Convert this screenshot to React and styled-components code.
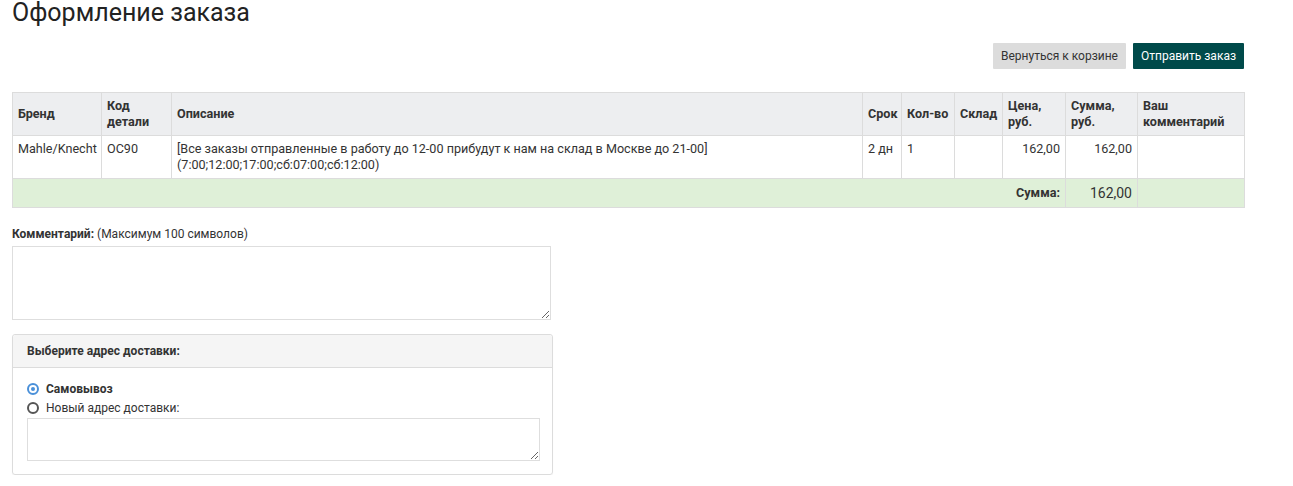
import React from 'react'
import styled, { createGlobalStyle } from 'styled-components'

const GlobalStyle = createGlobalStyle`
  body {
    margin: 0;
    background: #fff;
    font-family: Roboto, "Liberation Sans", Arial, sans-serif;
    color: #333;
  }
`;

const Page = styled.div`
  width: 1232px;
  padding: 0 12px;
`;
const Title = styled.h1`
  margin: 0;
  font-size: 25px;
  line-height: 26px;
  font-weight: 400;
  color: #222;
`;
const Actions = styled.div`
  display: flex;
  justify-content: flex-end;
  gap: 7px;
  margin-top: 17px;
  margin-bottom: 23px;
`;
const Button = styled.button`
  height: 26px;
  padding: 0 8px;
  border: 0;
  border-radius: 1px;
  font-family: inherit;
  font-size: 12px;
  cursor: pointer;
  background: ${p => (p.$primary ? '#004a4a' : '#dcdcdc')};
  color: ${p => (p.$primary ? '#fff' : '#333')};
`;
const Table = styled.table`
  width: 1232px;
  table-layout: fixed;
  border-collapse: collapse;
  font-size: 12.6px;
  line-height: 16px;
`;
const Th = styled.th`
  background: #edeef0;
  border: 1px solid #dcdcdc;
  padding: 5px 5px;
  height: 32px;
  text-align: left;
  vertical-align: middle;
  font-weight: 700;
  color: #333;
  white-space: ${p => (p.$nowrap ? 'nowrap' : 'normal')};
`;
const Td = styled.td`
  border: 1px solid #dcdcdc;
  padding: 5px 5px;
  height: 32px;
  vertical-align: top;
  text-align: ${p => (p.$right ? 'right' : 'left')};
`;
const TotalRow = styled.tr`
  background: #dff0d8;
`;
const TotalCell = styled.td`
  border: 1px solid #dcdcdc;
  padding: 5px 5px;
  height: 18px;
  text-align: right;
  font-weight: ${p => (p.$label ? 700 : 400)};
  font-size: ${p => (p.$big ? '14px' : '12.6px')};
`;
const CommentLabel = styled.div`
  margin-top: 19px;
  font-size: 12px;
  line-height: 14px;
  b {
    font-weight: 700;
  }
`;
const TextArea = styled.textarea`
  display: block;
  box-sizing: border-box;
  width: ${p => p.$width}px;
  height: ${p => p.$height}px;
  margin-top: ${p => p.$top || 0}px;
  border: 1px solid #dedede;
  border-radius: 0;
  font-family: inherit;
  font-size: 13px;
  resize: vertical;
  outline: none;
`;
const Panel = styled.div`
  width: 541px;
  box-sizing: border-box;
  margin-top: 14px;
  border: 1px solid #dcdcdc;
  border-radius: 3px;
  box-shadow: 0 1px 1px rgba(0, 0, 0, 0.05);
`;
const PanelHead = styled.div`
  height: 32px;
  display: flex;
  align-items: center;
  padding: 0 14px;
  background: #f5f5f5;
  border-bottom: 1px solid #dcdcdc;
  border-radius: 3px 3px 0 0;
  font-size: 12px;
  font-weight: 700;
`;
const PanelBody = styled.div`
  padding: 11px 14px 13px;
`;
const RadioRow = styled.label`
  display: flex;
  align-items: center;
  gap: 7px;
  height: 19px;
  font-size: 12px;
  font-weight: ${p => (p.$checked ? 700 : 400)};
`;
const Radio = styled.span`
  width: 12px;
  height: 12px;
  box-sizing: border-box;
  border-radius: 50%;
  border: 2px solid ${p => (p.$checked ? '#4a90d9' : '#555')};
  display: flex;
  align-items: center;
  justify-content: center;
  &::after {
    content: '';
    width: 4px;
    height: 4px;
    border-radius: 50%;
    background: ${p => (p.$checked ? '#4a90d9' : 'transparent')};
  }
`;

const columns = [
  { title: 'Бренд', width: 89 },
  { title: 'Код детали', width: 70 },
  { title: 'Описание', width: 691 },
  { title: 'Срок', width: 39 },
  { title: 'Кол-во', width: 53, nowrap: true },
  { title: 'Склад', width: 48 },
  { title: 'Цена, руб.', width: 63 },
  { title: 'Сумма, руб.', width: 72 },
  { title: 'Ваш комментарий', width: 107 },
];

const App = () => {
  return (
    <Page>
      <GlobalStyle />
      <Title>Оформление заказа</Title>
      <Actions>
        <Button>Вернуться к корзине</Button>
        <Button $primary>Отправить заказ</Button>
      </Actions>
      <Table>
        <colgroup>
          {columns.map(c => (
            <col key={c.title} style={{ width: c.width }} />
          ))}
        </colgroup>
        <thead>
          <tr>
            {columns.map(c => (
              <Th key={c.title} $nowrap={c.nowrap}>{c.title}</Th>
            ))}
          </tr>
        </thead>
        <tbody>
          <tr>
            <Td>Mahle/Knecht</Td>
            <Td>OC90</Td>
            <Td>
              [Все заказы отправленные в работу до 12-00 прибудут к нам на склад в Москве до 21-00]
              <br />
              (7:00;12:00;17:00;сб:07:00;сб:12:00)
            </Td>
            <Td>2 дн</Td>
            <Td>1</Td>
            <Td></Td>
            <Td $right>162,00</Td>
            <Td $right>162,00</Td>
            <Td></Td>
          </tr>
          <TotalRow>
            <TotalCell colSpan={7} $label>Сумма:</TotalCell>
            <TotalCell $big>162,00</TotalCell>
            <TotalCell></TotalCell>
          </TotalRow>
        </tbody>
      </Table>
      <CommentLabel>
        <b>Комментарий:</b> (Максимум 100 символов)
      </CommentLabel>
      <TextArea $width={539} $height={74} $top={5} />
      <Panel>
        <PanelHead>Выберите адрес доставки:</PanelHead>
        <PanelBody>
          <RadioRow $checked>
            <Radio $checked />
            Самовывоз
          </RadioRow>
          <RadioRow>
            <Radio />
            Новый адрес доставки:
          </RadioRow>
          <TextArea $width={513} $height={43} $top={1} />
        </PanelBody>
      </Panel>
    </Page>
  )
}

export default App
